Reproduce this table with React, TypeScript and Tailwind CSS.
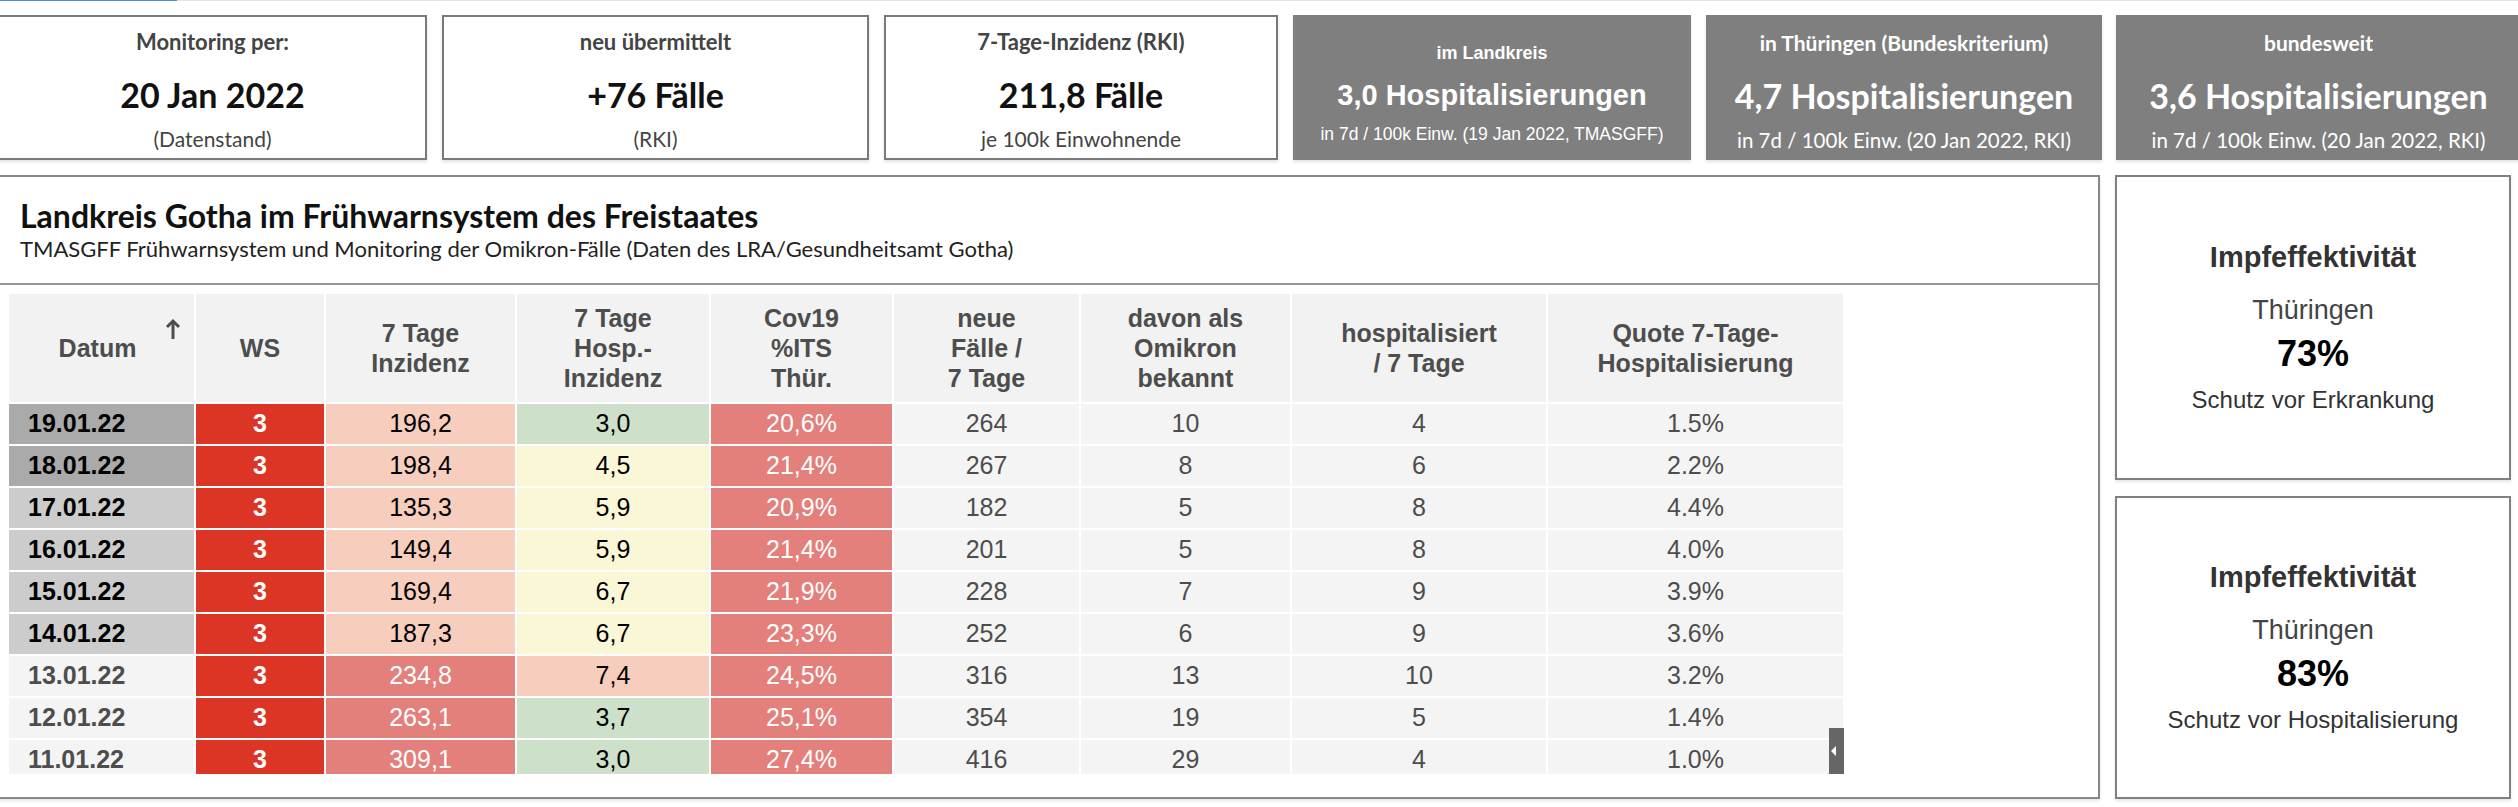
import { ReactNode } from "react";

type Shade = "dark" | "mid" | "light";
type Heat = "p" | "s" | "g" | "y";

interface Row {
  date: string;
  shade: Shade;
  inz: string;
  inzHeat: Heat;
  hosp: string;
  hospHeat: Heat;
  its: string;
  cases: number;
  omikron: number;
  hospitalized: number;
  quote: string;
}

const rows: Row[] = [
  { date: "19.01.22", shade: "dark", inz: "196,2", inzHeat: "p", hosp: "3,0", hospHeat: "g", its: "20,6%", cases: 264, omikron: 10, hospitalized: 4, quote: "1.5%" },
  { date: "18.01.22", shade: "dark", inz: "198,4", inzHeat: "p", hosp: "4,5", hospHeat: "y", its: "21,4%", cases: 267, omikron: 8, hospitalized: 6, quote: "2.2%" },
  { date: "17.01.22", shade: "mid", inz: "135,3", inzHeat: "p", hosp: "5,9", hospHeat: "y", its: "20,9%", cases: 182, omikron: 5, hospitalized: 8, quote: "4.4%" },
  { date: "16.01.22", shade: "mid", inz: "149,4", inzHeat: "p", hosp: "5,9", hospHeat: "y", its: "21,4%", cases: 201, omikron: 5, hospitalized: 8, quote: "4.0%" },
  { date: "15.01.22", shade: "mid", inz: "169,4", inzHeat: "p", hosp: "6,7", hospHeat: "y", its: "21,9%", cases: 228, omikron: 7, hospitalized: 9, quote: "3.9%" },
  { date: "14.01.22", shade: "mid", inz: "187,3", inzHeat: "p", hosp: "6,7", hospHeat: "y", its: "23,3%", cases: 252, omikron: 6, hospitalized: 9, quote: "3.6%" },
  { date: "13.01.22", shade: "light", inz: "234,8", inzHeat: "s", hosp: "7,4", hospHeat: "p", its: "24,5%", cases: 316, omikron: 13, hospitalized: 10, quote: "3.2%" },
  { date: "12.01.22", shade: "light", inz: "263,1", inzHeat: "s", hosp: "3,7", hospHeat: "g", its: "25,1%", cases: 354, omikron: 19, hospitalized: 5, quote: "1.4%" },
  { date: "11.01.22", shade: "light", inz: "309,1", inzHeat: "s", hosp: "3,0", hospHeat: "g", its: "27,4%", cases: 416, omikron: 29, hospitalized: 4, quote: "1.0%" },
];

const shadeClass: Record<Shade, string> = {
  dark: "bg-[#aaaaaa] text-black",
  mid: "bg-[#cccccc] text-black",
  light: "bg-[#f4f4f4] text-[#4d4d4d]",
};

const heatClass: Record<Heat, string> = {
  p: "bg-[#f7cebd] text-black",
  s: "bg-[#e3807c] text-white",
  g: "bg-[#cde0c9] text-black",
  y: "bg-[#faf7d7] text-black",
};

const lato = "font-['Lato','Noto_Sans',sans-serif]";
const arial = "font-['Liberation_Sans',Arial,sans-serif]";

// white cards on the left of the top row
const InfoCard = ({ width, label, value, note }: { width: string; label: string; value: string; note: string }) => (
  <div className={`${width} ${lato} h-[145px] shrink-0 bg-white border-2 border-[#7a7a7a] shadow-[0_2px_3px_rgba(0,0,0,0.12)] flex flex-col items-center`}>
    <div className="mt-[10px] text-[22px] leading-[30px] font-bold text-[#444]">{label}</div>
    <div className="mt-[16px] text-[34px] leading-[44px] font-bold text-[#111]">{value}</div>
    <div className="mt-[8px] text-[21px] leading-[28px] text-[#444]">{note}</div>
  </div>
);

const HospCard = ({ width, label, value, note }: { width: string; label: string; value: string; note: string }) => (
  <div className={`${width} ${lato} h-[145px] shrink-0 bg-[#7f7f7f] border-2 border-[#7f7f7f] shadow-[0_2px_3px_rgba(0,0,0,0.12)] flex flex-col items-center text-white`}>
    <div className="mt-[11px] text-[21px] leading-[30px] font-bold">{label}</div>
    <div className="mt-[16px] text-[34px] leading-[44px] font-bold">{value}</div>
    <div className="mt-[8px] text-[20.5px] leading-[28px]">{note}</div>
  </div>
);

const VaxPanel = ({ className, value, note }: { className: string; value: string; note: string }) => (
  <div className={`${className} ${arial} bg-white border-2 border-[#808080] shadow-[0_2px_3px_rgba(0,0,0,0.1)] flex flex-col items-center justify-center`}>
    <div className="text-[29px] leading-[34px] font-bold text-[#333]">Impfeffektivität</div>
    <div className="mt-[20px] text-[27px] leading-[32px] text-[#444]">Thüringen</div>
    <div className="mt-[7px] text-[36px] leading-[42px] font-bold text-black">{value}</div>
    <div className="mt-[10px] text-[24px] leading-[30px] text-[#333]">{note}</div>
  </div>
);

const Th = ({ children, className = "" }: { children: ReactNode; className?: string }) => (
  <div className={`relative bg-[#f2f2f2] flex items-center justify-center text-center text-[25px] leading-[30px] font-bold text-[#4d4d4d] ${className}`}>
    {children}
  </div>
);

const Td = ({ children, className = "bg-[#f4f4f4] text-[#4d4d4d]" }: { children: ReactNode; className?: string }) => (
  <div className={`h-[40px] flex items-center justify-center text-[25px] ${className}`}>{children}</div>
);

export default function App() {
  return (
    <div className="w-[2520px] -ml-[2px] h-[807px] overflow-hidden bg-white">
      {/* tab indicator line */}
      <div className="h-px bg-[#e2e2e2] flex">
        <div className="ml-[2px] w-[177px] bg-[#4f86ec]" />
      </div>

      <div className="mt-[14px] flex gap-[15px]">
        <InfoCard width="w-[429px]" label="Monitoring per:" value="20 Jan 2022" note="(Datenstand)" />
        <InfoCard width="w-[427px]" label="neu übermittelt" value="+76 Fälle" note="(RKI)" />
        <InfoCard width="w-[394px]" label="7-Tage-Inzidenz (RKI)" value="211,8 Fälle" note="je 100k Einwohnende" />
        <div className={`w-[398px] ${arial} h-[145px] shrink-0 bg-[#7f7f7f] shadow-[0_2px_3px_rgba(0,0,0,0.12)] flex flex-col items-center text-white`}>
          <div className="mt-[26px] text-[18px] leading-[24px] font-bold">im Landkreis</div>
          <div className="mt-[12px] text-[29px] leading-[36px] font-bold">3,0 Hospitalisierungen</div>
          <div className="mt-[10px] text-[17.5px] leading-[22px]">in 7d / 100k Einw. (19 Jan 2022, TMASGFF)</div>
        </div>
        <div className="flex gap-[14px]">
          <HospCard width="w-[396px]" label="in Thüringen (Bundeskriterium)" value="4,7 Hospitalisierungen" note="in 7d / 100k Einw. (20 Jan 2022, RKI)" />
          <HospCard width="w-[405px]" label="bundesweit" value="3,6 Hospitalisierungen" note="in 7d / 100k Einw. (20 Jan 2022, RKI)" />
        </div>
      </div>

      <div className="mt-[15px] flex gap-[15px] h-[624px]">
        {/* main panel */}
        <div className="w-[2102px] shrink-0 border-2 border-[#888] bg-white shadow-[0_2px_3px_rgba(0,0,0,0.1)] flex flex-col">
          <div className={`${lato} border-b-2 border-[#999] pl-[20px] pt-[20px] pb-[21px]`}>
            <h1 className="text-[32px] leading-[38px] font-bold text-[#111]">Landkreis Gotha im Frühwarnsystem des Freistaates</h1>
            <p className="mt-[1px] text-[22px] leading-[26px] text-[#222]">
              TMASGFF Frühwarnsystem und Monitoring der Omikron-Fälle (Daten des LRA/Gesundheitsamt Gotha)
            </p>
          </div>

          <div className="pl-[9px] pt-[9px]">
            <div className={`${arial} relative w-[1836px] h-[480px] overflow-hidden`}>
              <div className="grid grid-cols-[185px_128px_189px_192px_181px_185px_209px_254px_295px] gap-[2px] bg-white">
                <Th className="h-[108px] pr-[8px]">
                  Datum
                  <svg className="absolute left-[156px] top-[24px]" width="16" height="22" viewBox="0 0 16 22" fill="none" stroke="#4d4d4d" strokeWidth="3">
                    <path d="M8 21V3" />
                    <path d="M2 9l6-6 6 6" strokeLinejoin="miter" />
                  </svg>
                </Th>
                <Th>WS</Th>
                <Th>7 Tage<br />Inzidenz</Th>
                <Th>7 Tage<br />Hosp.-<br />Inzidenz</Th>
                <Th>Cov19<br />%ITS<br />Thür.</Th>
                <Th>neue<br />Fälle /<br />7 Tage</Th>
                <Th>davon als<br />Omikron<br />bekannt</Th>
                <Th>hospitalisiert<br />/ 7 Tage</Th>
                <Th>Quote 7-Tage-<br />Hospitalisierung</Th>

                {rows.map((r) => (
                  <div key={r.date} className="contents">
                    <div className={`h-[40px] flex items-center pl-[19px] text-[25px] font-bold ${shadeClass[r.shade]}`}>{r.date}</div>
                    <Td className="bg-[#dc3526] text-white font-bold">3</Td>
                    <Td className={heatClass[r.inzHeat]}>{r.inz}</Td>
                    <Td className={heatClass[r.hospHeat]}>{r.hosp}</Td>
                    <Td className="bg-[#e3807c] text-white">{r.its}</Td>
                    <Td>{r.cases}</Td>
                    <Td>{r.omikron}</Td>
                    <Td>{r.hospitalized}</Td>
                    <Td>{r.quote}</Td>
                  </div>
                ))}
              </div>

              {/* column toggle tab */}
              <div className="absolute left-[1820px] bottom-0 w-[15px] h-[46px] bg-[#666] flex items-center">
                <svg width="6" height="10" viewBox="0 0 6 10" className="ml-[2px]">
                  <path d="M5 0L0 5l5 5z" fill="#fff" />
                </svg>
              </div>
            </div>
          </div>
        </div>

        {/* right column */}
        <div className="w-[396px] shrink-0 flex flex-col gap-[16px]">
          <VaxPanel className="h-[305px]" value="73%" note="Schutz vor Erkrankung" />
          <VaxPanel className="flex-1" value="83%" note="Schutz vor Hospitalisierung" />
        </div>
      </div>
    </div>
  );
}
